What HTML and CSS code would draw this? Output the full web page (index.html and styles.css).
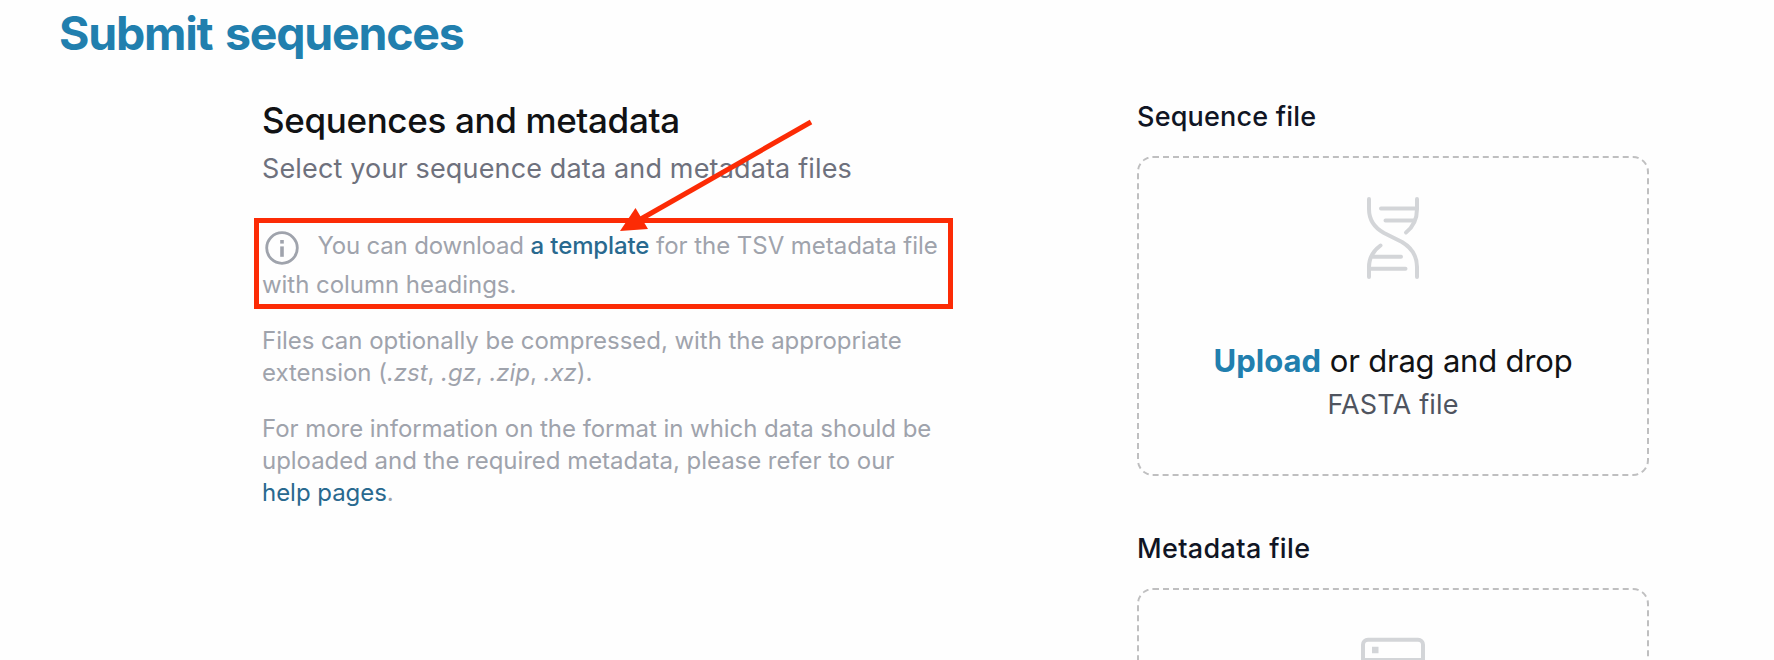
FILE: index.html
```
<!DOCTYPE html>
<html lang="en">
<head>
<meta charset="utf-8">
<title>Submit sequences</title>
<link rel="stylesheet" href="styles.css">
</head>
<body>
<main class="page">
  <h1 class="page-title">Submit sequences</h1>
  <div class="columns">
    <section class="intro">
      <h2 class="intro-title">Sequences and metadata</h2>
      <p class="intro-sub">Select your sequence data and metadata files</p>
      <p class="note"><svg class="info-icon" viewBox="0 0 34 34" width="34" height="34" fill="none" stroke="currentColor"><circle cx="17" cy="17" r="15.3" stroke-width="2.8"/><path d="M17 15.4v10.4" stroke-width="3.6"/><path d="M17 9v3.6" stroke-width="3.6"/></svg><span class="lead">You can download</span> <a class="link strong">a template</a> <span>for the TSV metadata file</span><br><span>with column headings.</span></p>
      <p class="text">Files can optionally be compressed, with the appropriate<br>extension (<i>.zst</i>, <i>.gz</i>, <i>.zip</i>, <i>.xz</i>).</p>
      <p class="text">For more information on the format in which data should be<br>uploaded and the required metadata, please refer to our<br><a class="link">help pages</a>.</p>
    </section>
    <section class="uploads">
      <div class="field">
        <h3 class="field-label">Sequence file</h3>
        <div class="dropzone">
          <svg class="drop-icon" viewBox="0 0 56 84" width="56" height="84" fill="none" stroke="currentColor" stroke-width="4" stroke-linecap="round" stroke-linejoin="round">
            <path d="M4 2V12C4 23 10 31 19 36L37 45C47 51 52 59 52 70V80"/>
            <path d="M52 2V12C52 22 48 30 41 35.500"/>
            <path d="M4 80V70C4 60 8 54 15.500 48.500"/>
            <path d="M16 11.500H51M20.500 23.500H49M8 59.700H36M5 71.700H40.500"/>
          </svg>
          <p class="drop-main"><span class="upload">Upload</span> <span class="drag">or drag and drop</span></p>
          <p class="drop-kind">FASTA file</p>
        </div>
      </div>
      <div class="field">
        <h3 class="field-label wide">Metadata file</h3>
        <div class="dropzone">
          <svg class="drop-icon" viewBox="0 0 64 84" width="64" height="84" fill="none" stroke="currentColor" stroke-width="4">
            <rect x="2" y="10.700" width="60" height="60" rx="5"/>
            <path d="M2 31H62M2 51H62"/>
            <path d="M11 21H17.500" stroke-width="6.500"/>
          </svg>
        </div>
      </div>
    </section>
  </div>
  <svg class="annotation" viewBox="0 0 1774 660" width="1774" height="660">
    <rect x="256.500" y="220.500" width="694" height="86" fill="none" stroke="#fc2b05" stroke-width="5"/>
    <path d="M811 122L640 219.500" stroke="#fc2b05" stroke-width="5"/>
    <path d="M620 231L635.500 208L648 229Z" fill="#fc2b05"/>
  </svg>
</main>
</body>
</html>
```
FILE: styles.css
```
* { box-sizing: border-box; margin: 0; }

body {
  background: #fefefe;
  font-family: Inter, "Liberation Sans", sans-serif;
}

.page {
  position: relative;
  height: 660px;
  padding: 5px 0 0 59px;
  overflow: hidden;
  white-space: nowrap;
}

.page-title {
  font-size: 46.5px;
  line-height: 56px;
  font-weight: 700;
  letter-spacing: -1.25px;
  word-spacing: 3px;
  color: #217fae;
}

.columns {
  display: flex;
  padding: 35px 0 0 203px;
}

.intro { width: 875px; }

.intro-title {
  font-size: 35px;
  line-height: 48px;
  font-weight: 500;
  letter-spacing: -.35px;
  color: #111214;
}

.intro-sub {
  margin-top: 5px;
  font-size: 27px;
  line-height: 40px;
  letter-spacing: .15px;
  color: #6e717d;
}

.note, .text {
  font-size: 24px;
  color: #9fa3ac;
}

.note {
  margin-top: 37px;
  line-height: 39px;
  letter-spacing: -.04px;
}

.lead { letter-spacing: -.18px; }

.info-icon {
  margin: 0 18.5px 0 3px;
  vertical-align: -10.5px;
}

.text {
  margin-top: 21px;
  line-height: 32px;
  letter-spacing: -.04px;
}

.text + .text { margin-top: 24px; }

.link { color: #29698f; }
.strong { font-weight: 500; letter-spacing: -.12px; }

.uploads {
  display: flex;
  flex-direction: column;
  gap: 52px;
  width: 512px;
}

.field-label {
  font-size: 27px;
  line-height: 42px;
  font-weight: 500;
  letter-spacing: .2px;
  color: #101524;
}

.wide { letter-spacing: .35px; }

.dropzone {
  display: flex;
  flex-direction: column;
  align-items: center;
  height: 320px;
  margin-top: 18px;
  padding-top: 39px;
  border: 2px dashed #bfbfc0;
  border-radius: 16px;
}

.drop-icon { color: #d3d5d8; }

.drop-main {
  margin-top: 58px;
  font-size: 31px;
  line-height: 44px;
  color: #111214;
}

.upload { font-weight: 700; color: #217fae; }
.drag { letter-spacing: -.2px; }

.drop-kind {
  margin-top: 2px;
  font-size: 27px;
  line-height: 40px;
  letter-spacing: .15px;
  color: #4f545f;
}

.annotation {
  position: absolute;
  top: 0;
  left: 0;
  pointer-events: none;
}
```
